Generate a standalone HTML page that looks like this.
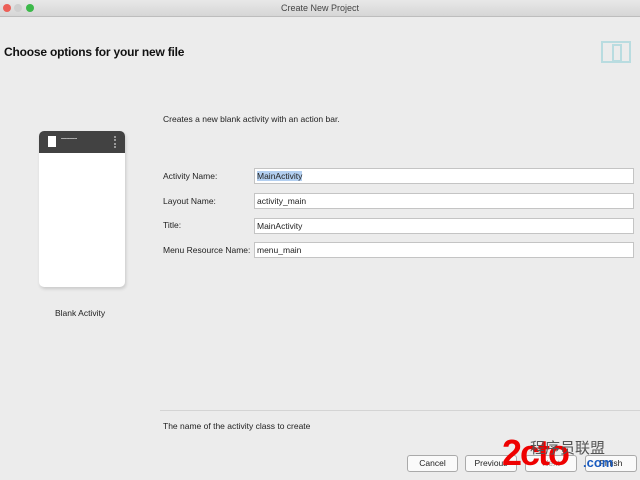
<!DOCTYPE html>
<html><head><meta charset="utf-8"><style>
body{margin:0;width:640px;height:480px;background:#ececec;font-family:"Liberation Sans",sans-serif;position:relative;overflow:hidden;font-size:9px;color:#222}
.tb{position:absolute;left:0;top:0;width:640px;height:16px;background:linear-gradient(#e8e8e8,#d6d6d6);border-bottom:1px solid #bdbdbd;text-align:center;font-size:9px;line-height:16px;color:#444}
.dot{position:absolute;top:4px;width:8px;height:8px;border-radius:50%}
.a{position:absolute}
.lbl{position:absolute;left:163px;font-size:8.5px}
.in{position:absolute;left:254px;width:376px;height:14px;background:#fff;border:1px solid #c4c4c4;font-size:8.5px;line-height:14px;padding-left:2px;box-sizing:content-box}
.btn{position:absolute;top:455px;height:15px;background:#fafafa;border:1px solid #aaa;border-radius:3px;font-size:8.5px;line-height:15px;text-align:center}
</style></head><body>
<div class="tb">Create New Project</div>
<div class="dot" style="left:3px;background:#ec5f57"></div>
<div class="dot" style="left:14px;background:#cfcfcf"></div>
<div class="dot" style="left:26px;background:#3cb94a"></div>
<div class="a" style="left:4px;top:45px;font-size:12px;font-weight:bold;color:#111;letter-spacing:-0.2px">Choose options for your new file</div>
<div class="a" style="left:601px;top:41px;width:30px;height:22px;border:2px solid #b9dce0;box-sizing:border-box"></div>
<div class="a" style="left:612px;top:44px;width:10px;height:18px;border:2px solid #b9dce0;box-sizing:border-box"></div>
<div class="a" style="left:163px;top:114px;font-size:8.5px">Creates a new blank activity with an action bar.</div>
<div class="a" style="left:39px;top:131px;width:86px;height:156px;background:#fff;border-radius:5px;box-shadow:1px 2px 3px rgba(0,0,0,.15);overflow:hidden">
 <div style="height:22px;background:#424242;position:relative">
  <div style="position:absolute;left:9px;top:5px;width:8px;height:11px;background:#fff"></div>
  <div style="position:absolute;left:22px;top:6px;color:#fff;font-size:8px">﹋﹋</div>
  <div style="position:absolute;left:75px;top:5px;width:2px;height:12px;border-left:2px dotted #999"></div>
 </div></div>
<div class="a" style="left:55px;top:308px;font-size:8.5px">Blank Activity</div>
<div class="lbl" style="top:171px">Activity Name:</div>
<div class="lbl" style="top:196px">Layout Name:</div>
<div class="lbl" style="top:220px">Title:</div>
<div class="lbl" style="top:245px">Menu Resource Name:</div>
<div class="in" style="top:168px"><span style="background:#b3cff0">MainActivity</span></div>
<div class="in" style="top:193px">activity_main</div>
<div class="in" style="top:218px">MainActivity</div>
<div class="in" style="top:242px">menu_main</div>
<div class="a" style="left:160px;top:410px;width:480px;height:1px;background:#d4d4d4"></div>
<div class="a" style="left:163px;top:421px;font-size:8.5px">The name of the activity class to create</div>
<div class="btn" style="left:407px;width:49px">Cancel</div>
<div class="btn" style="left:465px;width:50px">Previous</div>
<div class="btn" style="left:525px;width:50px;color:#999">Next</div>
<div class="btn" style="left:585px;width:50px">Finish</div>
<div class="a" style="left:502px;top:434px;font-size:36px;font-weight:bold;color:#e00;letter-spacing:-2px;line-height:38px">2cto</div>
<div class="a" style="left:583px;top:455px;font-size:13px;font-weight:bold;color:#1a5bbf">.com</div>
<div class="a" style="left:530px;top:437px;font-size:15px;color:#555;font-family:'Liberation Sans','Noto Sans CJK SC',sans-serif">程序员联盟</div>
</body></html>
